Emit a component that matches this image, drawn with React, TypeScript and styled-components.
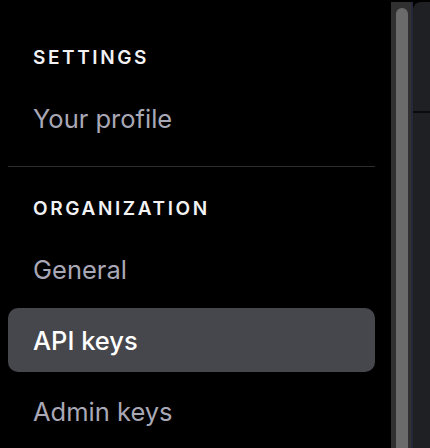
import React from 'react';
import styled, { createGlobalStyle } from 'styled-components';

const GlobalStyle = createGlobalStyle`
    html, body {
        margin: 0;
        padding: 0;
        background: #000;
        height: 100%;
        overflow: hidden;
    }
    #root {
        height: 100%;
    }
`;

const Page = styled.div`
    display: flex;
    height: 448px;
    width: 430px;
    overflow: hidden;
    background: #000;
    font-family: Inter, "Noto Sans", sans-serif;
`;

const Sidebar = styled.nav`
    width: 391px;
    flex-shrink: 0;
    padding: 0 16px 0 8px;
    box-sizing: border-box;
    display: flex;
    flex-direction: column;
`;

const Section = styled.div<{ $top: number }>`
    flex-shrink: 0;
    display: flex;
    flex-direction: column;
    gap: 7px;
    padding: ${(p) => p.$top}px 0 16px;
`;

const Heading = styled.h2`
    flex-shrink: 0;
    margin: 0 0 8px;
    padding-left: 25px;
    height: 28px;
    display: flex;
    align-items: center;
    font-size: 19px;
    font-weight: 600;
    letter-spacing: 2.6px;
    color: #f2f2f4;
`;

const Item = styled.a<{ $active?: boolean }>`
    flex-shrink: 0;
    display: flex;
    align-items: center;
    height: 64px;
    padding-left: 25px;
    border-radius: 10px;
    font-size: 25.5px;
    font-weight: ${(p) => (p.$active ? 500 : 400)};
    color: ${(p) => (p.$active ? '#ffffff' : '#a9a8b7')};
    background: ${(p) => (p.$active ? '#46474c' : 'transparent')};
    text-decoration: none;
`;

const Divider = styled.hr`
    flex-shrink: 0;
    margin: 0;
    border: none;
    height: 1px;
    background: #2e2e2f;
`;

const Track = styled.div`
    flex-shrink: 0;
    margin-top: 2px;
    width: 20px;
    background: #303030;
    padding: 6px 3px 0 5px;
    box-sizing: border-box;
`;

const Thumb = styled.div`
    height: 100%;
    background: #6b6b6b;
    border-radius: 6px 6px 0 0;
`;

const Gap = styled.div`
    flex-shrink: 0;
    margin-top: 2px;
    width: 2px;
    background: #26273a;
`;

const Panel = styled.div`
    flex: 1;
    margin-top: 2px;
    background: #1f2024;
    border-top-left-radius: 8px;
    display: flex;
    flex-direction: column;
`;

const PanelHead = styled.div`
    height: 109px;
    border-bottom: 2px solid #0b0b0d;
`;

function App() {
    return (
        <>
            <GlobalStyle />
            <Page>
                <Sidebar>
                    <Section $top={43}>
                        <Heading>SETTINGS</Heading>
                        <Item>Your profile</Item>
                    </Section>
                    <Divider />
                    <Section $top={27}>
                        <Heading>ORGANIZATION</Heading>
                        <Item>General</Item>
                        <Item $active>API keys</Item>
                        <Item>Admin keys</Item>
                    </Section>
                </Sidebar>
                <Track>
                    <Thumb />
                </Track>
                <Gap />
                <Panel>
                    <PanelHead />
                </Panel>
            </Page>
        </>
    );
}

export default App;
